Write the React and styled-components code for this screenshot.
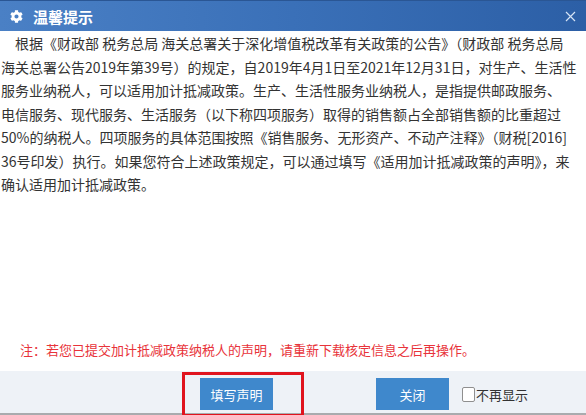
import React from 'react';
import styled, { createGlobalStyle } from 'styled-components';
import { FaCog } from 'react-icons/fa';

const GlobalStyle = createGlobalStyle`
  html, body {
    margin: 0;
    padding: 0;
    background: #ffffff;
  }
  body {
    font-family: "Noto Sans CJK SC", "Noto Sans", sans-serif;
  }
`;

const Dialog = styled.div`
  width: 586px;
  height: 415px;
  display: flex;
  flex-direction: column;
  background: #ffffff;
  overflow: hidden;
`;

const TitleBar = styled.div`
  height: 31px;
  flex: none;
  display: flex;
  align-items: center;
  padding: 0 10px 0 10px;
  background: linear-gradient(to right, #4a80c5 0%, #3a70b8 50%, #2c5fa6 100%);
  border-top: 1px solid #2a5694;
  box-sizing: border-box;
  color: #ffffff;
`;

const Title = styled.span`
  margin-left: 10px;
  font-size: 15px;
  font-weight: 700;
  letter-spacing: 0;
  flex: 1;
`;

const CloseIcon = styled.svg`
  width: 11px;
  height: 11px;
  margin-right: 0px;
`;

const Body = styled.div`
  flex: 1;
  display: flex;
  flex-direction: column;
  padding: 1px 0 0 1px;
`;

const Paragraph = styled.div`
  font-size: 14px;
  line-height: 23.5px;
  color: #333333;
`;

const Line = styled.div`
  white-space: nowrap;
  padding-left: ${(p) => (p.$indent ? '14px' : '0')};
`;

const Notice = styled.div`
  margin-top: auto;
  margin-bottom: 12px;
  padding-left: 19px;
  font-size: 13px;
  line-height: 18px;
  color: #e8333a;
`;

const Footer = styled.div`
  height: 44px;
  flex: none;
  display: flex;
  align-items: flex-start;
  padding: 7px 0 0 200px;
  box-sizing: border-box;
  background: #eef2f7;
  border-bottom: 2px solid #a9abae;
`;

const Marked = styled.div`
  position: relative;
  margin-right: 103px;
`;

const RedMark = styled.div`
  position: absolute;
  top: -6px;
  left: -18px;
  right: -31px;
  bottom: -7px;
  border: 3px solid #e0141e;
  pointer-events: none;
`;

const Button = styled.button`
  width: 73px;
  height: 32px;
  border: none;
  border-radius: 0;
  background: #3f88cc;
  color: #ffffff;
  font-family: "Noto Sans CJK SC", sans-serif;
  font-size: 13px;
  padding: 0;
  cursor: pointer;
`;

const CheckLabel = styled.label`
  display: flex;
  align-items: center;
  height: 32px;
  margin-left: 13px;
  font-size: 13px;
  color: #333333;
`;

const Box = styled.span`
  width: 11px;
  height: 13px;
  border: 1px solid #8f8f8f;
  border-radius: 2px;
  background: #ffffff;
  margin-right: 1px;
`;

export default function App() {
  return (
    <>
      <GlobalStyle />
      <Dialog>
        <TitleBar>
          <FaCog size={13} color="#ffffff" />
          <Title>温馨提示</Title>
          <CloseIcon viewBox="0 0 11 11">
            <path d="M1 1 L10 10 M10 1 L1 10" stroke="#d5e3f5" strokeWidth="1.2" />
          </CloseIcon>
        </TitleBar>
        <Body>
          <Paragraph>
            <Line $indent>根据《财政部 税务总局 海关总署关于深化增值税改革有关政策的公告》（财政部 税务总局</Line>
            <Line>海关总署公告2019年第39号）的规定，自2019年4月1日至2021年12月31日，对生产、生活性</Line>
            <Line>服务业纳税人，可以适用加计抵减政策。生产、生活性服务业纳税人，是指提供邮政服务、</Line>
            <Line>电信服务、现代服务、生活服务（以下称四项服务）取得的销售额占全部销售额的比重超过</Line>
            <Line>50%的纳税人。四项服务的具体范围按照《销售服务、无形资产、不动产注释》（财税[2016]</Line>
            <Line>36号印发）执行。如果您符合上述政策规定，可以通过填写《适用加计抵减政策的声明》，来</Line>
            <Line>确认适用加计抵减政策。</Line>
          </Paragraph>
          <Notice>注：若您已提交加计抵减政策纳税人的声明，请重新下载核定信息之后再操作。</Notice>
        </Body>
        <Footer>
          <Marked>
            <Button>填写声明</Button>
            <RedMark />
          </Marked>
          <Button>关闭</Button>
          <CheckLabel>
            <Box />
            不再显示
          </CheckLabel>
        </Footer>
      </Dialog>
    </>
  );
}
